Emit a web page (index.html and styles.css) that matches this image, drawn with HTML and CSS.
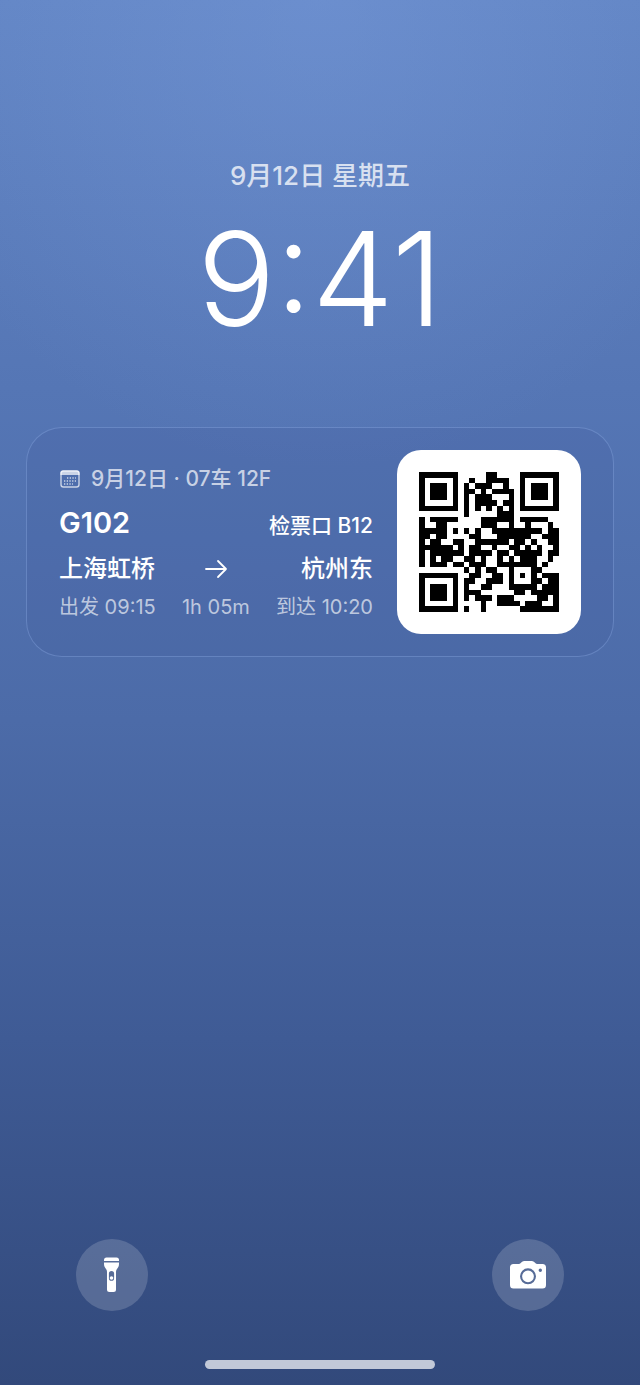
FILE: index.html
```
<!DOCTYPE html>
<html lang="zh-CN">
    <head>
        <meta charset="UTF-8">
        <meta name="viewport" content="width=device-width, initial-scale=1">
        <title>锁定屏幕</title>
        <link rel="stylesheet" href="styles.css">
    </head>
    <body>
        <header class="clock">
            <div class="date">9月12日 星期五</div>
            <time class="time">9:41</time>
        </header>

        <main class="ticket">
            <div class="trip">
                <div class="seat">
                    <svg class="calendar" viewBox="0 0 22 22" aria-hidden="true">
                        <rect x="2" y="3" width="18" height="16" rx="2.500" fill="none" stroke="currentColor" stroke-width="1.400"/>
                        <path d="M1.400 7V5A2.600 2.600 0 0 1 4 2.400H18A2.600 2.600 0 0 1 20.600 5V7Z" fill="currentColor"/>
                        <path d="M8 10H17M5 13H17M5 16H14" fill="none" stroke="currentColor" stroke-width="1.300" stroke-dasharray="1.300 1.400"/>
                    </svg>
                    <span>9月12日 · 07车 12F</span>
                </div>
                <div class="train">
                    <h1 class="number">G102</h1>
                    <span class="gate">检票口 B12</span>
                </div>
                <div class="route">
                    <div class="stop">
                        <span class="station">上海虹桥</span>
                        <span class="hour">出发 09:15</span>
                    </div>
                    <div class="stop middle">
                        <svg class="arrow" viewBox="0 0 24 20" aria-hidden="true">
                            <path d="M2 10H22M14 2L22 10L14 18" fill="none" stroke="currentColor" stroke-width="1.800" stroke-linecap="round" stroke-linejoin="round"/>
                        </svg>
                        <span class="hour">1h 05m</span>
                    </div>
                    <div class="stop end">
                        <span class="station">杭州东</span>
                        <span class="hour">到达 10:20</span>
                    </div>
                </div>
            </div>
            <div class="code">
                <svg id="qr" class="qr" viewBox="0 0 25 25" role="img" aria-label="车票二维码"></svg>
            </div>
        </main>

        <footer class="dock">
            <div class="shortcuts">
                <button type="button" class="shortcut" aria-label="手电筒">
                    <svg class="icon" viewBox="0 0 40 40" fill="currentColor" aria-hidden="true">
                        <path d="M12 5Q12 2.500 14.500 2.500H24.500Q27 2.500 27 5V6H12Z"/>
                        <path fill-rule="evenodd" d="M12 7.500H27V9Q27 11 26 12.500L24.500 14.800Q24 15.600 24 17V34.500Q24 37 21.500 37H17.500Q15 37 15 34.500V17Q15 15.600 14.500 14.800L13 12.500Q12 11 12 9ZM19.500 16A2.600 2.600 0 0 0 16.900 18.600V23.200A2.600 2.600 0 0 0 22.100 23.200V18.600A2.600 2.600 0 0 0 19.500 16Z"/>
                        <circle cx="19.500" cy="23" r="1.800"/>
                    </svg>
                </button>
                <button type="button" class="shortcut" aria-label="相机">
                    <svg class="icon" viewBox="0 0 40 40" aria-hidden="true">
                        <path fill="currentColor" fill-rule="evenodd" d="M5.500 9H10.500Q12 9 13 7.800L13.800 7Q15 6 16.500 6H23.500Q25 6 26.200 7L27 7.800Q28 9 29.500 9H34.500Q38 9 38 12.500V30Q38 33.500 34.500 33.500H5.500Q2 33.500 2 30V12.500Q2 9 5.500 9ZM20 13.300A8 8 0 1 0 20 29.300A8 8 0 1 0 20 13.300ZM20 15.400A5.900 5.900 0 1 1 20 27.200A5.900 5.900 0 1 1 20 15.400ZM32.300 13.500A1.700 1.700 0 1 0 32.300 16.900A1.700 1.700 0 1 0 32.300 13.500Z"/>
                    </svg>
                </button>
            </div>
            <div class="home-bar"></div>
        </footer>

        <script>
            // one character per module, # is black
            var rows = [
                "#######.....##....#######",
                "#.....#..#..####..#.....#",
                "#.###.#.#.###..#..#.###.#",
                "#.###.#.##.#.####.#.###.#",
                "#.###.#.#.###...#.#.###.#",
                "#.....#.#.####.##.#.....#",
                "#######.#.#.#.#.#.#######",
                "........#.....###........",
                "#.#####....######.#####..",
                "#..##......###..#..#...#.",
                "#####.#.#.#..#########.##",
                "##.##....##...######..###",
                "#.##..##..######.##.#..##",
                "######.#.##..#..##.#.#..#",
                "#.######.####.##.#####.##",
                "#.#.##..##.#..#.#.###..#.",
                "#.###.##.###..#######.#..",
                "........#.#.##..#...##...",
                "#######..##..##.#.#.#.###",
                "#.....#.##..###.#...##.##",
                "#.###.#.#..##...#####.###",
                "#.###.#.###......##.#####",
                "#.###.#.#.###.###....##.#",
                "#.....#....#..####.###..#",
                "#######.#..#......#######"
            ];
            var d = "";

            for (var y = 0; y < rows.length; y++) {
                // neighbouring black modules become one bar
                var bars = rows[y].matchAll(/#+/g);
                for (var bar of bars) {
                    var w = bar[0].length;
                    d += "M" + bar.index + " " + y + "h" + w + "v1h-" + w + "z";
                }
            }

            var path = document.createElementNS("http://www.w3.org/2000/svg", "path");
            path.setAttribute("d", d);
            path.setAttribute("shape-rendering", "crispEdges");
            document.getElementById("qr").appendChild(path);
        </script>
    </body>
</html>
```
FILE: styles.css
```
* {
    box-sizing: border-box;
}

body {
    margin: 0;
    min-height: 100vh;
    display: flex;
    flex-direction: column;
    background-image:
        radial-gradient(ellipse 70% 34% at 50% 0, rgba(125, 160, 225, 0.35), rgba(125, 160, 225, 0)),
        linear-gradient(#6285c4, #5576b5 28%, #4c6ba8 52%, #3f5b95 75%, #32497b);
    color: #fff;
    font-family: Inter, "Noto Sans CJK SC", sans-serif;
}

.clock {
    padding-top: 156px;
    text-align: center;
}

.date {
    color: rgba(255, 255, 255, 0.75);
    font-size: 26px;
    font-weight: 500;
    line-height: 40px;
}

.time {
    display: block;
    font-size: 130px;
    font-weight: 300;
    line-height: 166px;
}

.ticket {
    display: flex;
    align-items: center;
    gap: 24px;
    margin: 65px 26px 0;
    padding: 22px 32px;
    background-color: rgba(65, 90, 155, 0.2);
    border: 1px solid rgba(150, 180, 235, 0.35);
    border-radius: 36px;
}

.trip {
    flex: 1;
    padding-top: 6px;
}

.seat {
    display: flex;
    align-items: center;
    gap: 10px;
    color: rgba(255, 255, 255, 0.7);
    font-size: 21px;
    font-weight: 500;
    line-height: 28px;
}

.calendar {
    width: 22px;
    height: 22px;
}

.train {
    display: flex;
    align-items: baseline;
    justify-content: space-between;
    margin-top: 10px;
}

.number {
    margin: 0;
    font-size: 29px;
    font-weight: 600;
    line-height: 40px;
}

.gate {
    font-size: 21px;
    font-weight: 500;
}

.route {
    display: flex;
    justify-content: space-between;
    margin-top: 6px;
}

.stop {
    display: flex;
    flex-direction: column;
}

.middle {
    align-items: center;
}

.end {
    align-items: flex-end;
}

.station {
    font-size: 24px;
    font-weight: 500;
    line-height: 40px;
}

.arrow {
    width: 24px;
    height: 40px;
}

.hour {
    color: rgba(255, 255, 255, 0.65);
    font-size: 20px;
    line-height: 36px;
}

.code {
    padding: 22px;
    background-color: #fff;
    border-radius: 24px;
}

.qr {
    display: block;
    width: 140px;
    height: 140px;
}

.dock {
    margin-top: auto;
    padding: 0 76px 16px;
}

.shortcuts {
    display: flex;
    justify-content: space-between;
}

.shortcut {
    display: flex;
    align-items: center;
    justify-content: center;
    width: 72px;
    height: 72px;
    padding: 0;
    background-color: rgba(255, 255, 255, 0.17);
    border: none;
    border-radius: 50%;
    color: #fff;
}

.icon {
    width: 40px;
    height: 40px;
}

.home-bar {
    width: 230px;
    height: 9px;
    margin: 49px auto 0;
    background-color: rgba(255, 255, 255, 0.7);
    border-radius: 5px;
}
```
